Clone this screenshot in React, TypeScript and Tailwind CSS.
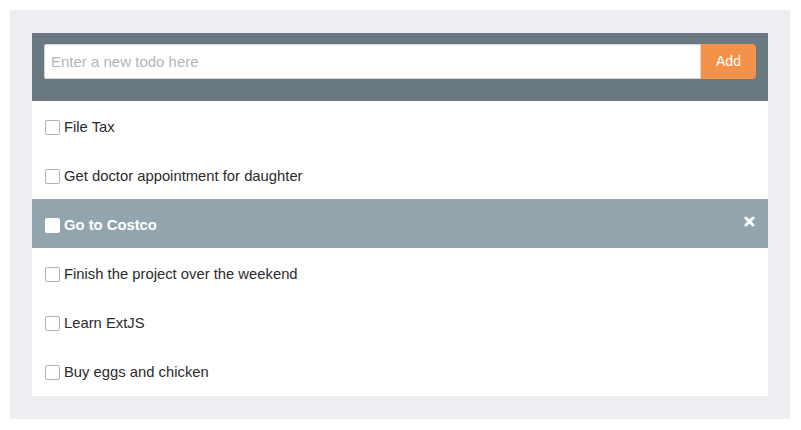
const todos = [
  { id: 1, text: 'File Tax' },
  { id: 2, text: 'Get doctor appointment for daughter' },
  { id: 3, text: 'Go to Costco', active: true },
  { id: 4, text: 'Finish the project over the weekend' },
  { id: 5, text: 'Learn ExtJS' },
  { id: 6, text: 'Buy eggs and chicken' },
];

function TodoRow({ text, active }: { text: string; active?: boolean }) {
  return (
    <div
      className={
        'flex items-center h-[49.17px] pt-[3px] pl-[13px] pr-[12px] ' +
        (active ? 'bg-[#92a5ad] text-white font-bold' : 'bg-white text-[#2b2b2b]')
      }
    >
      <span
        className={
          'w-[15px] h-[15px] rounded-[2px] shrink-0 ' +
          (active ? 'bg-white' : 'border border-[#b3b3b3] bg-white')
        }
      />
      <span className="ml-[4px] text-[14.8px] leading-none">{text}</span>
      {active && (
        <svg className="ml-auto mr-[1px] mt-[-7px]" width="11" height="11" viewBox="0 0 11 11">
          <path d="M2 2 L9 9 M9 2 L2 9" stroke="#fff" strokeWidth="3" strokeLinecap="round" />
        </svg>
      )}
    </div>
  );
}

export default function App() {
  return (
    <div className="w-[801px] h-[430px] bg-white p-[10px] font-['Liberation_Sans',Arial,sans-serif]">
      <div className="w-[780px] h-[409px] bg-[#eeeef2] pt-[23px] px-[22px]">
        <div className="w-[736px] bg-white">
          <div className="bg-[#6a7981] h-[68px] pt-[11px] px-[12px]">
            <div className="flex h-[35px]">
              <input
                type="text"
                placeholder="Enter a new todo here"
                className="flex-1 h-full bg-white rounded-l-[2px] px-[6px] text-[15px] text-[#333] placeholder:text-[#b5b5b5] outline-none border border-[#d6d6d6]"
              />
              <button className="w-[55px] h-full bg-[#f5924a] text-white text-[14px] rounded-r-[4px]">
                Add
              </button>
            </div>
          </div>
          {todos.map((t) => (
            <TodoRow key={t.id} text={t.text} active={t.active} />
          ))}
        </div>
      </div>
    </div>
  );
}
